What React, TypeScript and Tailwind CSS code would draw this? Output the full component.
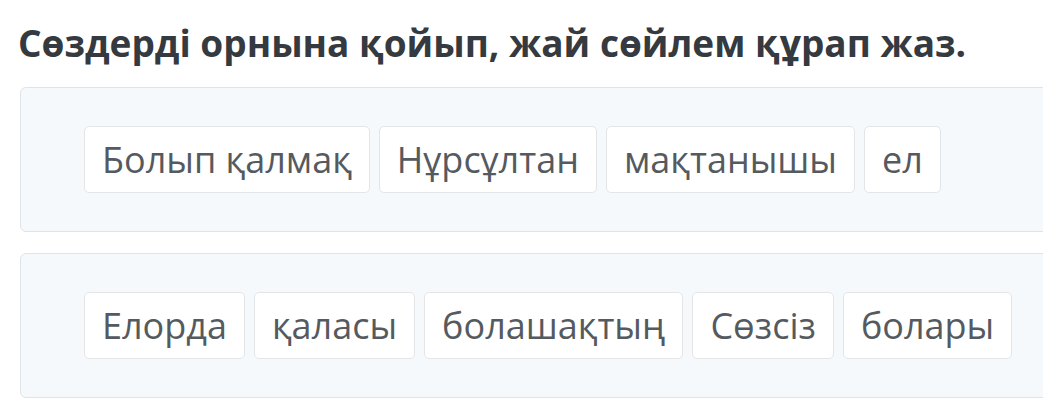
import React from "react";

const rows = [
  ["Болып қалмақ", "Нұрсұлтан", "мақтанышы", "ел"],
  ["Елорда", "қаласы", "болашақтың", "Сөзсіз", "болары"],
];

export default function App() {
  return (
    <div
      className="w-[1043px] h-[400px] overflow-hidden bg-white"
      style={{ fontFamily: '"Open Sans", "Noto Sans", sans-serif' }}
    >
      <h1 className="pl-[18px] pt-[18px] text-[37px] leading-[49px] font-bold text-[#343a40] whitespace-nowrap">
        Сөздерді орнына қойып, жай сөйлем құрап жаз.
      </h1>
      <div className="mt-[20px] flex flex-col gap-[21px] pl-[20px]">
        {rows.map((row, i) => (
          <div
            key={i}
            className="w-[1040px] h-[145px] flex items-center pl-[63px] bg-[#f5f9fc] border border-[#dfe4e8] rounded-[6px]"
          >
            <div className="flex gap-[9px]">
              {row.map((w) => (
                <div
                  key={w}
                  className="h-[67px] px-[17px] flex items-center bg-white border border-[#e3e6e9] rounded-[5px] text-[36px] text-[#555a60] whitespace-nowrap"
                >
                  {w}
                </div>
              ))}
            </div>
          </div>
        ))}
      </div>
    </div>
  );
}
